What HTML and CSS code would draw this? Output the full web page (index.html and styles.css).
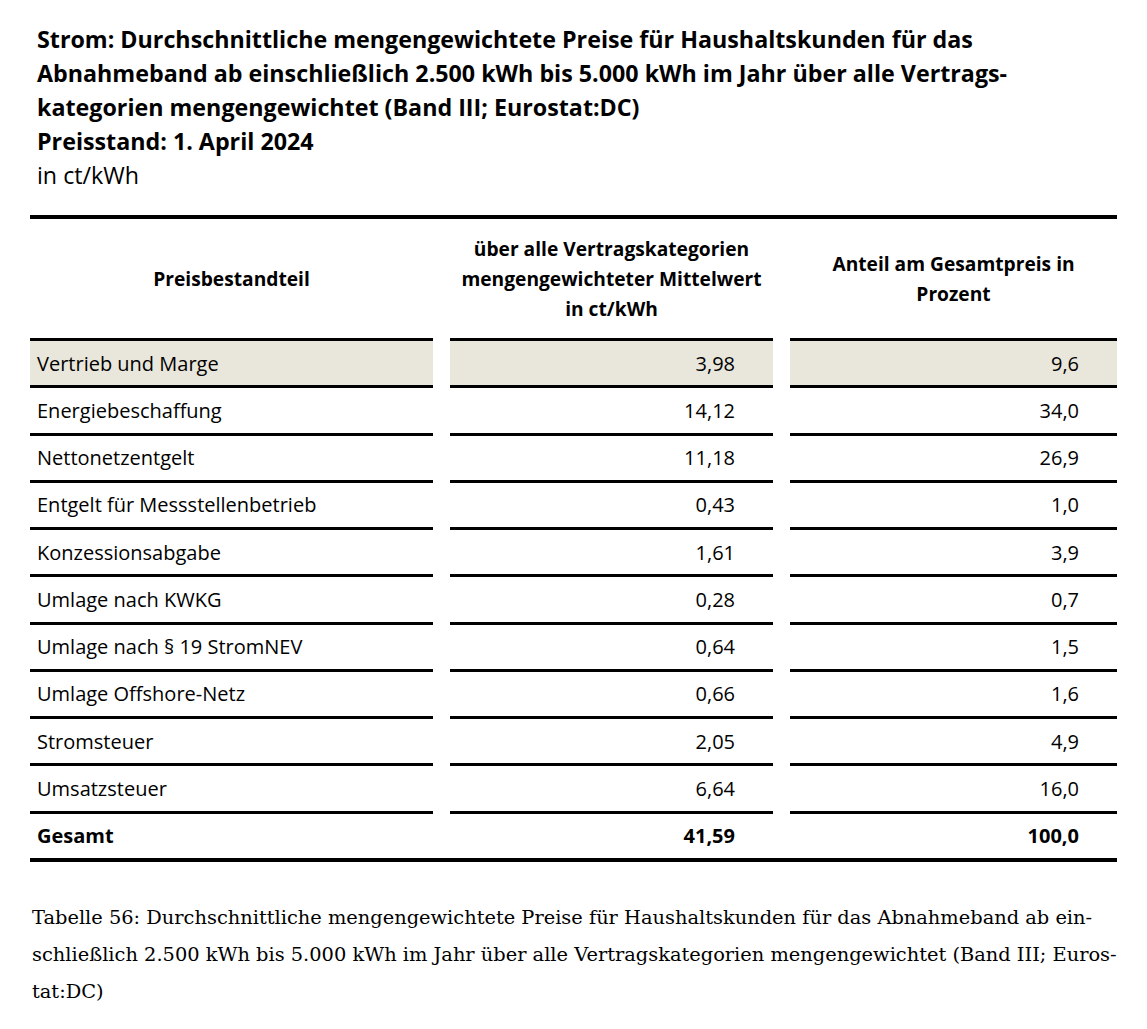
FILE: index.html
```html
<!DOCTYPE html>
<html lang="de">
<head>
<meta charset="utf-8">
<title>Strom Preise</title>
<link rel="stylesheet" href="styles.css">
</head>
<body>
<div class="page">
  <div class="title">
    <div class="title-bold">Strom: Durchschnittliche mengengewichtete Preise für Haushaltskunden für das<br>Abnahmeband ab einschließlich 2.500 kWh bis 5.000 kWh im Jahr über alle Vertrags-<br>kategorien mengengewichtet (Band III; Eurostat:DC)<br>Preisstand: 1. April 2024</div>
    <div class="title-unit">in ct/kWh</div>
  </div>

  <div class="table">
    <div class="head">
      <div class="hcell">Preisbestandteil</div>
      <div class="hcell">über alle Vertragskategorien<br>mengengewichteter Mittelwert<br>in ct/kWh</div>
      <div class="hcell">Anteil am Gesamtpreis in<br>Prozent</div>
    </div>

    <div class="row shaded"><div class="cell">Vertrieb und Marge</div><div class="cell num">3,98</div><div class="cell num">9,6</div></div>
    <div class="row"><div class="cell">Energiebeschaffung</div><div class="cell num">14,12</div><div class="cell num">34,0</div></div>
    <div class="row"><div class="cell">Nettonetzentgelt</div><div class="cell num">11,18</div><div class="cell num">26,9</div></div>
    <div class="row"><div class="cell">Entgelt für Messstellenbetrieb</div><div class="cell num">0,43</div><div class="cell num">1,0</div></div>
    <div class="row"><div class="cell">Konzessionsabgabe</div><div class="cell num">1,61</div><div class="cell num">3,9</div></div>
    <div class="row"><div class="cell">Umlage nach KWKG</div><div class="cell num">0,28</div><div class="cell num">0,7</div></div>
    <div class="row"><div class="cell">Umlage nach § 19 StromNEV</div><div class="cell num">0,64</div><div class="cell num">1,5</div></div>
    <div class="row"><div class="cell">Umlage Offshore-Netz</div><div class="cell num">0,66</div><div class="cell num">1,6</div></div>
    <div class="row"><div class="cell">Stromsteuer</div><div class="cell num">2,05</div><div class="cell num">4,9</div></div>
    <div class="row"><div class="cell">Umsatzsteuer</div><div class="cell num">6,64</div><div class="cell num">16,0</div></div>
    <div class="row total"><div class="cell">Gesamt</div><div class="cell num">41,59</div><div class="cell num">100,0</div></div>
  </div>

  <p class="caption">Tabelle 56: Durchschnittliche mengengewichtete Preise für Haushaltskunden für das Abnahmeband ab ein-<br>schließlich 2.500 kWh bis 5.000 kWh im Jahr über alle Vertragskategorien mengengewichtet (Band III; Euros-<br>tat:DC)</p>
</div>
</body>
</html>
```
FILE: styles.css
```css
html, body {
  margin: 0;
  padding: 0;
  background: #ffffff;
}

body {
  font-family: "Open Sans", "Liberation Sans", sans-serif;
  color: #000;
}

.page {
  padding: 22px 30px 0 30px;
  width: 1087px;
}

.title {
  padding-left: 7px;
  font-size: 23.25px;
  line-height: 34px;
}

.title-bold {
  font-weight: 700;
}

.title-unit {
  font-weight: 400;
}

.table {
  margin-top: 23px;
  border-top: 4px solid #000;
  border-bottom: 4px solid #000;
}

.head,
.row {
  display: grid;
  grid-template-columns: 403px 323px 327px;
  column-gap: 17px;
}

.head {
  height: 119px;
  align-items: center;
  font-weight: 700;
  font-size: 19.2px;
  line-height: 30px;
  text-align: center;
}

.hcell {
  padding: 0 6px;
}

.cell {
  border-top: 3px solid #000;
  height: 44.25px;
  display: flex;
  align-items: center;
  padding: 0 7px;
  font-size: 20px;
}

.cell.num {
  justify-content: flex-end;
  padding-right: 38px;
}

.row.shaded .cell {
  background: #e9e6dc;
}

.row.total .cell {
  font-weight: 700;
  height: 44px;
}

.caption {
  margin: 37px 0 0 2px;
  font-family: "DejaVu Serif", "Liberation Serif", serif;
  font-size: 19.4px;
  line-height: 37px;
}
```
